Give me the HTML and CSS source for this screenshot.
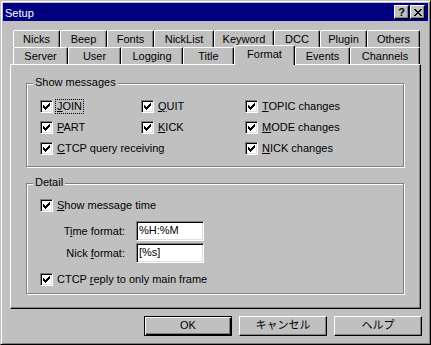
FILE: index.html
```html
<!DOCTYPE html>
<html lang="ja">
<head>
<meta charset="utf-8">
<title>Setup</title>
<link rel="stylesheet" href="styles.css">
</head>
<body>
<div class="window">
  <div class="titlebar">
    <span class="title">Setup</span>
    <div class="tbtns">
      <span class="tbtn help">?</span>
      <span class="tbtn close"><svg width="8" height="7" viewBox="0 0 8 7" shape-rendering="crispEdges"><path d="M0 0h2v1h-2z M6 0h2v1h-2z M1 1h2v1h-2z M5 1h2v1h-2z M2 2h4v1h-4z M3 3h2v1h-2z M2 4h4v1h-4z M1 5h2v1h-2z M5 5h2v1h-2z M0 6h2v1h-2z M6 6h2v1h-2z" fill="#000"/></svg></span>
    </div>
  </div>
  <div class="body">
    <div class="tabs">
      <div class="tabrow back">
        <span class="tab">Nicks</span>
        <span class="tab">Beep</span>
        <span class="tab">Fonts</span>
        <span class="tab">NickList</span>
        <span class="tab">Keyword</span>
        <span class="tab">DCC</span>
        <span class="tab">Plugin</span>
        <span class="tab">Others</span>
      </div>
      <div class="tabrow front">
        <span class="tab">Server</span>
        <span class="tab">User</span>
        <span class="tab">Logging</span>
        <span class="tab">Title</span>
        <span class="tab sel">Format</span>
        <span class="tab">Events</span>
        <span class="tab">Channels</span>
      </div>
    </div>
    <div class="panel">
      <div class="group g1">
        <div class="gtitle">Show messages</div>
        <div class="cbgrid">
          <div class="cb"><span class="box"><svg width="7" height="7" viewBox="0 0 7 7" shape-rendering="crispEdges"><path d="M6 0h1v1h-1z M5 1h2v1h-2z M0 2h1v1h-1z M4 2h3v1h-3z M0 3h2v1h-2z M3 3h3v1h-3z M0 4h5v1h-5z M1 5h3v1h-3z M2 6h1v1h-1z"/></svg></span><span class="lbl focus"><u>J</u>OIN</span></div>
          <div class="cb"><span class="box"><svg width="7" height="7" viewBox="0 0 7 7" shape-rendering="crispEdges"><path d="M6 0h1v1h-1z M5 1h2v1h-2z M0 2h1v1h-1z M4 2h3v1h-3z M0 3h2v1h-2z M3 3h3v1h-3z M0 4h5v1h-5z M1 5h3v1h-3z M2 6h1v1h-1z"/></svg></span><span class="lbl"><u>Q</u>UIT</span></div>
          <div class="cb"><span class="box"><svg width="7" height="7" viewBox="0 0 7 7" shape-rendering="crispEdges"><path d="M6 0h1v1h-1z M5 1h2v1h-2z M0 2h1v1h-1z M4 2h3v1h-3z M0 3h2v1h-2z M3 3h3v1h-3z M0 4h5v1h-5z M1 5h3v1h-3z M2 6h1v1h-1z"/></svg></span><span class="lbl"><u>T</u>OPIC changes</span></div>
          <div class="cb"><span class="box"><svg width="7" height="7" viewBox="0 0 7 7" shape-rendering="crispEdges"><path d="M6 0h1v1h-1z M5 1h2v1h-2z M0 2h1v1h-1z M4 2h3v1h-3z M0 3h2v1h-2z M3 3h3v1h-3z M0 4h5v1h-5z M1 5h3v1h-3z M2 6h1v1h-1z"/></svg></span><span class="lbl"><u>P</u>ART</span></div>
          <div class="cb"><span class="box"><svg width="7" height="7" viewBox="0 0 7 7" shape-rendering="crispEdges"><path d="M6 0h1v1h-1z M5 1h2v1h-2z M0 2h1v1h-1z M4 2h3v1h-3z M0 3h2v1h-2z M3 3h3v1h-3z M0 4h5v1h-5z M1 5h3v1h-3z M2 6h1v1h-1z"/></svg></span><span class="lbl"><u>K</u>ICK</span></div>
          <div class="cb"><span class="box"><svg width="7" height="7" viewBox="0 0 7 7" shape-rendering="crispEdges"><path d="M6 0h1v1h-1z M5 1h2v1h-2z M0 2h1v1h-1z M4 2h3v1h-3z M0 3h2v1h-2z M3 3h3v1h-3z M0 4h5v1h-5z M1 5h3v1h-3z M2 6h1v1h-1z"/></svg></span><span class="lbl"><u>M</u>ODE changes</span></div>
          <div class="cb span2"><span class="box"><svg width="7" height="7" viewBox="0 0 7 7" shape-rendering="crispEdges"><path d="M6 0h1v1h-1z M5 1h2v1h-2z M0 2h1v1h-1z M4 2h3v1h-3z M0 3h2v1h-2z M3 3h3v1h-3z M0 4h5v1h-5z M1 5h3v1h-3z M2 6h1v1h-1z"/></svg></span><span class="lbl"><u>C</u>TCP query receiving</span></div>
          <div class="cb"><span class="box"><svg width="7" height="7" viewBox="0 0 7 7" shape-rendering="crispEdges"><path d="M6 0h1v1h-1z M5 1h2v1h-2z M0 2h1v1h-1z M4 2h3v1h-3z M0 3h2v1h-2z M3 3h3v1h-3z M0 4h5v1h-5z M1 5h3v1h-3z M2 6h1v1h-1z"/></svg></span><span class="lbl"><u>N</u>ICK changes</span></div>
        </div>
      </div>
      <div class="group g2">
        <div class="gtitle">Detail</div>
        <div class="cb solo first"><span class="box"><svg width="7" height="7" viewBox="0 0 7 7" shape-rendering="crispEdges"><path d="M6 0h1v1h-1z M5 1h2v1h-2z M0 2h1v1h-1z M4 2h3v1h-3z M0 3h2v1h-2z M3 3h3v1h-3z M0 4h5v1h-5z M1 5h3v1h-3z M2 6h1v1h-1z"/></svg></span><span class="lbl"><u>S</u>how message time</span></div>
        <div class="fmt">
          <span class="flabel">T<u>i</u>me format:</span>
          <div class="edit">%H:%M</div>
          <span class="flabel">Nick <u>f</u>ormat:</span>
          <div class="edit">[%s]</div>
        </div>
        <div class="cb solo last"><span class="box"><svg width="7" height="7" viewBox="0 0 7 7" shape-rendering="crispEdges"><path d="M6 0h1v1h-1z M5 1h2v1h-2z M0 2h1v1h-1z M4 2h3v1h-3z M0 3h2v1h-2z M3 3h3v1h-3z M0 4h5v1h-5z M1 5h3v1h-3z M2 6h1v1h-1z"/></svg></span><span class="lbl">CTCP <u>r</u>eply to only main frame</span></div>
      </div>
    </div>
    <div class="buttons">
      <span class="btn default">OK</span>
      <span class="btn">キャンセル</span>
      <span class="btn">ヘルプ</span>
    </div>
  </div>
</div>
</body>
</html>
```
FILE: styles.css
```css
html, body {
  margin: 0;
  padding: 0;
  background: #c0c0c0;
}

.window {
  width: 431px;
  height: 345px;
  box-sizing: border-box;
  border: 1px solid;
  border-color: #c0c0c0 #000 #000 #c0c0c0;
  box-shadow: inset 1px 1px #fff, inset -1px -1px #808080;
  padding: 2px;
  background: #c0c0c0;
  font: 11px "Liberation Sans", "Noto Sans CJK JP", sans-serif;
  color: #000;
  display: flex;
  flex-direction: column;
}

.titlebar {
  height: 18px;
  flex: none;
  background: #000080;
  color: #fff;
  display: flex;
  align-items: flex-start;
  justify-content: space-between;
  padding: 0 3px 0 2px;
}

.title {
  line-height: 17px;
  margin-top: 2px;
}

.tbtns {
  display: flex;
  gap: 1px;
  margin-top: 2px;
}

.tbtn {
  width: 15px;
  height: 14px;
  box-sizing: border-box;
  background: #c0c0c0;
  border: 1px solid;
  border-color: #fff #000 #000 #fff;
  box-shadow: inset -1px -1px #808080;
  display: flex;
  align-items: center;
  justify-content: center;
  color: #000;
}

.tbtn.help {
  font-weight: bold;
  font-size: 11px;
  line-height: 12px;
}

.tbtn svg {
  display: block;
}

.body {
  flex: 1;
  display: flex;
  flex-direction: column;
  padding: 9px 7px 0;
}

.tabrow {
  display: flex;
  height: 17px;
  padding-left: 3px;
}

.tab {
  box-sizing: border-box;
  height: 17px;
  border: 1px solid;
  border-bottom: 0;
  border-color: #fff #000 transparent #fff;
  border-radius: 2px 2px 0 0;
  box-shadow: inset -1px 0 #808080;
  text-align: center;
  line-height: 16px;
  white-space: nowrap;
  background: #c0c0c0;
}

.back .tab:nth-child(1) { width: 47px; }
.back .tab:nth-child(2) { width: 47px; }
.back .tab:nth-child(3) { width: 47px; }
.back .tab:nth-child(4) { width: 60px; }
.back .tab:nth-child(5) { width: 60px; }
.back .tab:nth-child(6) { width: 46px; }
.back .tab:nth-child(7) { width: 47px; }
.back .tab:nth-child(8) { width: 53px; }

.front .tab:nth-child(1) { width: 55px; }
.front .tab:nth-child(2) { width: 53px; }
.front .tab:nth-child(3) { width: 62px; }
.front .tab:nth-child(4) { width: 51px; }
.front .tab:nth-child(5) { width: 61px; }
.front .tab:nth-child(6) { width: 55px; }
.front .tab:nth-child(7) { width: 70px; }

.tab.sel {
  height: 20px;
  margin-top: -2px;
  position: relative;
  z-index: 2;
}

.panel {
  height: 245px;
  flex: none;
  box-sizing: border-box;
  border: 1px solid;
  border-color: #fff #000 #000 #fff;
  box-shadow: inset -1px -1px #808080;
  padding: 18px 16px 0 15px;
}

.group {
  box-sizing: border-box;
  border: 1px solid #808080;
  box-shadow: 1px 1px #fff, inset 1px 1px #fff;
}

.g1 { height: 84px; }
.g2 { height: 111px; margin-top: 16px; }

.gtitle {
  width: fit-content;
  margin: -8px 0 0 6px;
  padding: 0 2px;
  background: #c0c0c0;
  line-height: 13px;
  position: relative;
}

.cbgrid {
  display: grid;
  grid-template-columns: 101px 104px auto;
  grid-auto-rows: 21px;
  margin: 11px 0 0 13px;
}

.span2 { grid-column: span 2; }

.cb {
  display: flex;
  align-items: flex-start;
  gap: 3px;
  height: 13px;
}

.box {
  width: 13px;
  height: 13px;
  flex: none;
  box-sizing: border-box;
  border: 1px solid;
  border-color: #808080 #fff #fff #808080;
  box-shadow: inset 1px 1px #000, inset -1px -1px #dfdfdf;
  background: #fff;
  padding: 2px 0 0 2px;
}

.box svg {
  display: block;
}

.lbl {
  line-height: 13px;
  padding: 0 1px;
  white-space: nowrap;
}

.focus {
  outline: 1px dotted #000;
  outline-offset: 0;
}

.solo { margin-left: 13px; }
.first { margin-top: 10px; }
.last { margin-top: 10px; }

.fmt {
  display: grid;
  grid-template-columns: 85px 68px;
  grid-auto-rows: 20px;
  column-gap: 11px;
  row-gap: 2px;
  margin: 9px 0 0 13px;
}

.flabel {
  text-align: right;
  line-height: 20px;
  white-space: nowrap;
}

.edit {
  box-sizing: border-box;
  height: 20px;
  border: 1px solid;
  border-color: #808080 #fff #fff #808080;
  box-shadow: inset 1px 1px #000, inset -1px -1px #dfdfdf;
  background: #fff;
  padding: 0 0 0 2px;
  line-height: 17px;
}

.buttons {
  display: flex;
  justify-content: flex-end;
  gap: 7px;
  margin-top: 7px;
  margin-right: -1px;
}

.btn {
  width: 88px;
  height: 20px;
  box-sizing: border-box;
  border: 1px solid;
  border-color: #fff #000 #000 #fff;
  box-shadow: inset -1px -1px #808080;
  text-align: center;
  line-height: 17px;
}

.btn.default {
  border-color: #000;
  box-shadow: inset 1px 1px #fff, inset -1px -1px #000, inset -2px -2px #808080;
}
```
